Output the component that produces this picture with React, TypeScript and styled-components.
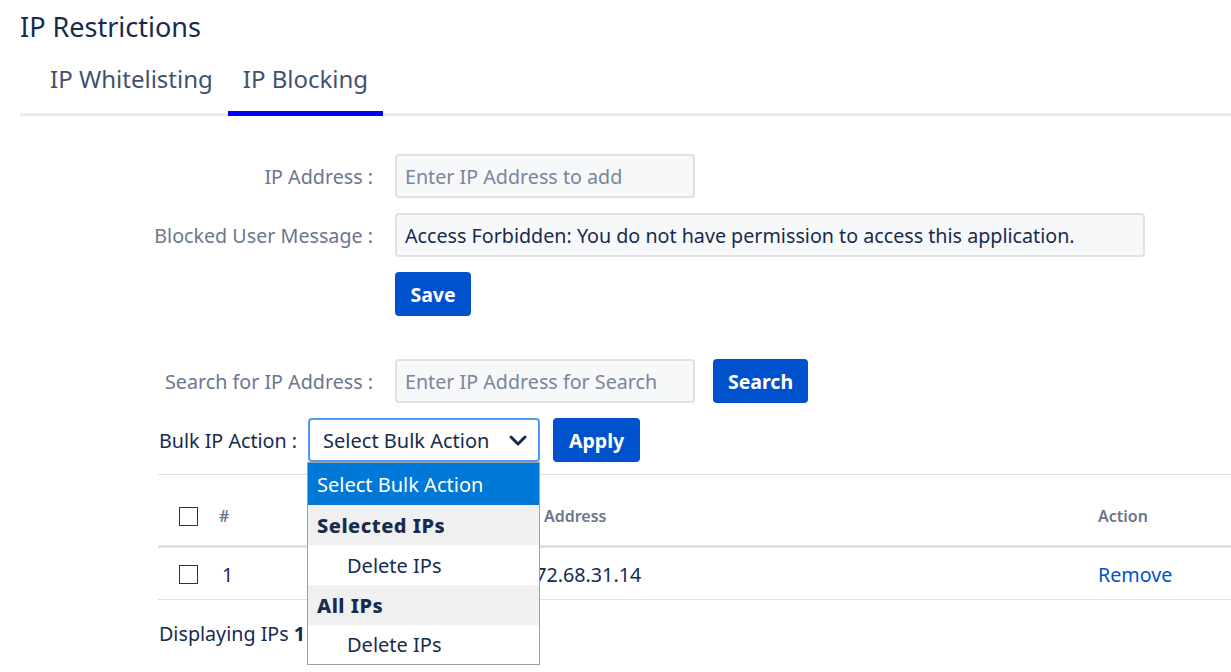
import React from "react";
import styled, { createGlobalStyle } from "styled-components";

const Global = createGlobalStyle`
  html, body { margin: 0; padding: 0; background: #fff; }
  body { font-family: "Noto Sans", "Open Sans", sans-serif; color: #172b4d; overflow: hidden; }
  * { box-sizing: border-box; }
`;

const Page = styled.div`
  width: 1231px;
  height: 672px;
  padding: 8px 0 0 20px;
  position: relative;
`;

const Title = styled.h1`
  margin: 0;
  font-size: 27px;
  font-weight: 400;
  line-height: 38px;
  color: #172b4d;
`;

const Tabs = styled.div`
  display: flex;
  border-bottom: 3px solid #ebecf0;
  margin-top: 15px;
`;

const Tab = styled.div<{ $active?: boolean }>`
  font-size: 24px;
  line-height: 32px;
  padding: 2px 15px 16px;
  color: #42526e;
  margin-bottom: -3px;
  border-bottom: 5px solid ${(p) => (p.$active ? "#0000ff" : "transparent")};
  &:first-child { margin-left: 15px; padding-left: 15px; }
`;

const Form = styled.div`
  display: grid;
  grid-template-columns: 353px auto;
  column-gap: 22px;
  row-gap: 15px;
  margin-top: 38px;
  align-items: center;
`;

const Label = styled.div`
  text-align: right;
  font-size: 19.7px;
  color: #6b778c;
  white-space: nowrap;
`;

const Input = styled.input<{ $w: number }>`
  width: ${(p) => p.$w}px;
  height: 44px;
  border: 2px solid #dfe1e6;
  border-radius: 4px;
  background: #f7f8f9;
  font-family: inherit;
  font-size: 19.7px;
  color: #172b4d;
  padding: 0 8px;
  outline: none;
  &::placeholder { color: #7a869a; }
`;

const Button = styled.button<{ $w: number }>`
  width: ${(p) => p.$w}px;
  height: 44px;
  border: none;
  border-radius: 4px;
  background: #0052cc;
  color: #fff;
  font-family: inherit;
  font-weight: 700;
  font-size: 19.5px;
  padding: 0;
`;

const Row = styled.div`
  display: flex;
  align-items: center;
  gap: 18px;
`;

const Spacer = styled.div`
  height: 13px;
  grid-column: 1 / span 2;
`;

const Lower = styled.div`
  margin-left: 138px;
  margin-top: 15px;
`;

const BulkRow = styled.div`
  display: flex;
  align-items: center;
  position: relative;
`;

const BulkLabel = styled.div`
  font-size: 19.7px;
  color: #172b4d;
  margin-right: 11px;
  margin-left: 1px;
`;

const SelectBox = styled.div`
  width: 232px;
  height: 44px;
  border: 2px solid #4c9aff;
  border-radius: 4px;
  background: #fff;
  display: flex;
  align-items: center;
  justify-content: space-between;
  padding: 0 10px 0 13px;
  font-size: 20px;
  color: #172b4d;
  margin-right: 13px;
`;

const Menu = styled.div`
  position: absolute;
  left: 149px;
  top: 44px;
  width: 233px;
  border: 1px solid #a0a0a0;
  background: #fff;
  z-index: 10;
`;

const Opt = styled.div<{ $kind: "hl" | "group" | "item"; $h?: number }>`
  height: ${(p) => p.$h ?? 40}px;
  display: flex;
  align-items: center;
  font-size: 20px;
  padding-left: ${(p) => (p.$kind === "item" ? 39 : 9)}px;
  background: ${(p) => (p.$kind === "hl" ? "#0078d7" : p.$kind === "group" ? "#f0f0f0" : "#fff")};
  color: ${(p) => (p.$kind === "hl" ? "#fff" : "#172b4d")};
  font-weight: ${(p) => (p.$kind === "group" ? 800 : 400)};
  letter-spacing: ${(p) => (p.$kind === "group" ? "0.5px" : "0")};
`;

const Table = styled.div`
  margin-top: 12px;
  border-top: 1px solid #dfe1e6;
`;

const TRow = styled.div<{ $head?: boolean }>`
  display: grid;
  grid-template-columns: 61px 305px 574px 1fr;
  align-items: center;
  height: ${(p) => (p.$head ? 73 : 52)}px;
  border-bottom: ${(p) => (p.$head ? "3px solid #dfe1e6" : "1px solid #dfe1e6")};
  padding-top: ${(p) => (p.$head ? 12 : 2)}px;
`;

const Cell = styled.div<{ $head?: boolean; $link?: boolean; $pad?: number }>`
  font-size: ${(p) => (p.$head ? 16 : 19.7)}px;
  font-weight: ${(p) => (p.$head ? 600 : 400)};
  color: ${(p) => (p.$head ? "#6b778c" : p.$link ? "#0052cc" : "#172b4d")};
  white-space: nowrap;
  padding-left: ${(p) => p.$pad ?? 0}px;
`;

const CheckCell = styled.div`
  padding-left: 21px;
  display: flex;
  align-items: center;
`;

const Check = styled.span`
  display: inline-block;
  width: 19px;
  height: 19px;
  border: 1.5px solid #333;
  background: #fff;
`;

const Footer = styled.div`
  font-size: 19.7px;
  margin-top: 20px;
  margin-left: 1px;
  color: #172b4d;
  b { font-weight: 700; }
`;

export default function App() {
  return (
    <Page>
      <Global />
      <Title>IP Restrictions</Title>
      <Tabs>
        <Tab>IP Whitelisting</Tab>
        <Tab $active>IP Blocking</Tab>
      </Tabs>
      <Form>
        <Label>IP Address :</Label>
        <Input $w={300} placeholder="Enter IP Address to add" />
        <Label>Blocked User Message :</Label>
        <Input $w={750} defaultValue="Access Forbidden: You do not have permission to access this application." />
        <div />
        <Button $w={76}>Save</Button>
        <Spacer />
        <Label>Search for IP Address :</Label>
        <Row>
          <Input $w={300} placeholder="Enter IP Address for Search" />
          <Button $w={95}>Search</Button>
        </Row>
      </Form>
      <Lower>
        <BulkRow>
          <BulkLabel>Bulk IP Action :</BulkLabel>
          <SelectBox>
            <span>Select Bulk Action</span>
            <svg width="20" height="14" viewBox="0 0 20 14">
              <polyline points="3,4 10,11 17,4" fill="none" stroke="#172b4d" strokeWidth="3" strokeLinecap="round" strokeLinejoin="round" />
            </svg>
          </SelectBox>
          <Button $w={87}>Apply</Button>
          <Menu>
            <Opt $kind="hl" $h={42}>Select Bulk Action</Opt>
            <Opt $kind="group">Selected IPs</Opt>
            <Opt $kind="item">Delete IPs</Opt>
            <Opt $kind="group">All IPs</Opt>
            <Opt $kind="item" $h={39}>Delete IPs</Opt>
          </Menu>
        </BulkRow>
        <Table>
          <TRow $head>
            <CheckCell><Check /></CheckCell>
            <Cell $head>#</Cell>
            <Cell $head>IP Address</Cell>
            <Cell $head>Action</Cell>
          </TRow>
          <TRow>
            <CheckCell><Check /></CheckCell>
            <Cell $pad={3}>1</Cell>
            <Cell>172.68.31.14</Cell>
            <Cell $link>Remove</Cell>
          </TRow>
        </Table>
        <Footer>Displaying IPs <b>1</b> - <b>1</b> of <b>1</b></Footer>
      </Lower>
    </Page>
  );
}
